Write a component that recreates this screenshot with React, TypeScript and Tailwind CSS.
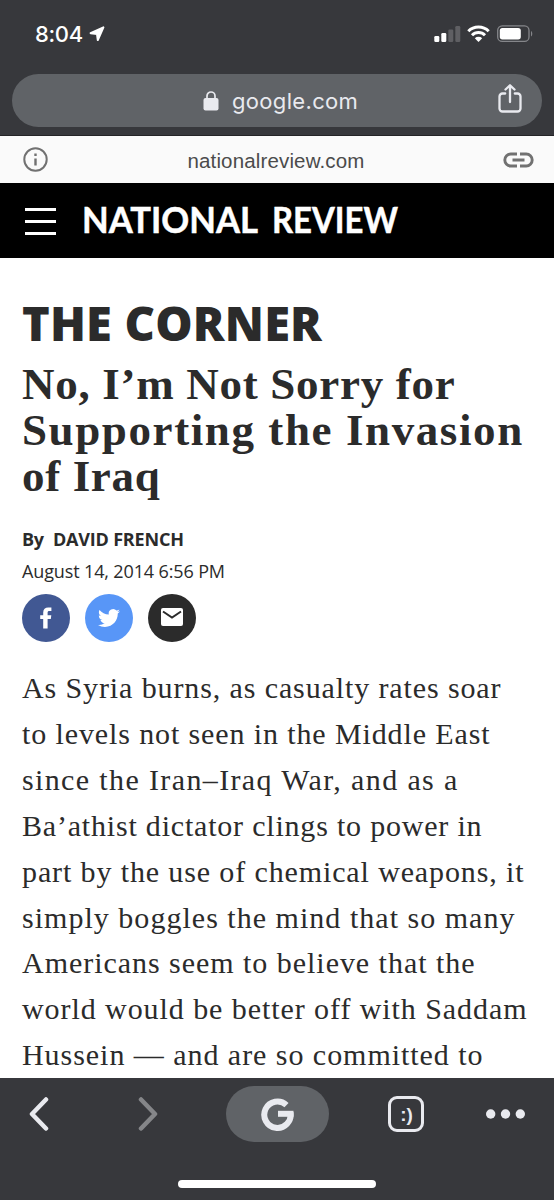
import { useLayoutEffect, useRef } from "react";

const paragraph = [
  { text: "As Syria burns, as casualty rates soar", width: 479 },
  { text: "to levels not seen in the Middle East", width: 468 },
  { text: "since the Iran–Iraq War, and as a", width: 436 },
  { text: "Ba’athist dictator clings to power in", width: 460 },
  { text: "part by the use of chemical weapons, it", width: 502 },
  { text: "simply boggles the mind that so many", width: 493 },
  { text: "Americans seem to believe that the", width: 453 },
  { text: "world would be better off with Saddam", width: 505 },
  { text: "Hussein — and are so committed to", width: 461 },
];

const headline = [
  { text: "No, I’m Not Sorry for", width: 433 },
  { text: "Supporting the Invasion", width: 501 },
  { text: "of Iraq", width: 138 },
];

// Tracks a line of text out (or in) until it fills the given width
function FittedText({ text, width, className = "" }: { text: string; width: number; className?: string }) {
  const ref = useRef<HTMLSpanElement>(null);

  useLayoutEffect(() => {
    const el = ref.current;
    if (!el) return;
    el.style.letterSpacing = "0px";
    const natural = el.getBoundingClientRect().width;
    el.style.letterSpacing = `${(width - natural) / (text.length - 0.5)}px`;
  }, [text, width]);

  return (
    <span className={`block whitespace-nowrap ${className}`}>
      <span ref={ref}>{text}</span>
    </span>
  );
}

function StatusBar() {
  return (
    <div className="flex h-[74px] items-start justify-between pl-[35px] pr-[21px] pt-[20px] text-white">
      <div className="flex items-center gap-[6px]">
        <FittedText text="8:04" width={48} className="text-[22px] leading-7 font-medium" />
        <svg className="h-4 w-4" viewBox="0 0 16 16" fill="currentColor" stroke="currentColor" strokeLinejoin="round">
          <path d="M14.400 1.400 8.800 14 8 8 1.600 7.200Z" strokeWidth="2" />
        </svg>
      </div>
      <svg className="mt-[4px] h-5 w-[100px]" viewBox="0 0 100 20">
        <g fill="#fff">
          <rect x="1.300" y="12" width="5" height="6" rx="1.300" />
          <rect x="8.300" y="9" width="5" height="9" rx="1.300" />
          <rect x="15.300" y="5.500" width="5" height="12.500" rx="1.300" opacity=".2" />
          <rect x="22.300" y="2" width="5" height="16" rx="1.300" opacity=".2" />
        </g>
        <g fill="none" stroke="#fff" strokeWidth="3">
          <path d="M35.300 7.200a14.500 14.500 0 0 1 20.400 0" />
          <path d="M39 11.300a9.200 9.200 0 0 1 13 0" />
        </g>
        <path d="M41.800 14.300a5.400 5.400 0 0 1 7.400 0L45.500 18Z" fill="#fff" />
        <rect x="64.700" y="1.800" width="31.300" height="15.600" rx="4.500" fill="none" stroke="#85868a" strokeWidth="1.300" />
        <rect x="66.800" y="4" width="21" height="11.400" rx="2.600" fill="#fff" />
        <path d="M98 7v5.500c1.700-.8 1.700-4.700 0-5.500Z" fill="#85868a" />
      </svg>
    </div>
  );
}

function AddressBar() {
  return (
    <div className="mx-3 flex h-[53px] items-center rounded-full bg-[#606367] pl-[191px] pr-[20px] text-[#e9eaef]">
      <svg className="h-5 w-4" viewBox="0 0 16 20">
        <rect x=".5" y="7" width="15" height="12.500" rx="2" fill="currentColor" />
        <path d="M4 8V5a4 4 0 0 1 8 0v3" fill="none" stroke="currentColor" strokeWidth="1.700" />
      </svg>
      <FittedText text="google.com" width={126} className="ml-[13px] text-[22px] leading-7" />
      <svg className="-mt-[4px] ml-auto h-[30px] w-6" viewBox="0 0 24 30" fill="none" stroke="currentColor" strokeWidth="2.300" strokeLinecap="round" strokeLinejoin="round">
        <path d="M7.200 9.500H4.500a3 3 0 0 0-3 3v12a3 3 0 0 0 3 3h15a3 3 0 0 0 3-3v-12a3 3 0 0 0-3-3h-2.700M12 18V1.500M7.500 5.500 12 1.300l4.500 4.200" />
      </svg>
    </div>
  );
}

function SourceBar() {
  return (
    <div className="flex h-[47px] items-center justify-between bg-[#fafafa] pl-[23px] pr-[20px] text-[#717171]">
      <svg className="h-[26px] w-[26px]" viewBox="0 0 26 26" fill="none" stroke="currentColor">
        <circle cx="12.500" cy="12.500" r="11.200" strokeWidth="2" />
        <path d="M12.500 11.500v7M12.500 6.500v2.400" strokeWidth="2.400" />
      </svg>
      <FittedText text="nationalreview.com" width={177} className="pt-[3px] font-['Liberation_Sans',sans-serif] text-[20.500px] leading-6 text-[#4b4b4b]" />
      <svg className="h-4 w-[31px]" viewBox="0 0 31 16" fill="none" stroke="currentColor" strokeWidth="2.900">
        <path d="M14 2H7.800a6 6 0 0 0 0 12H14M17 2h6.200a6 6 0 0 1 0 12H17M9.500 8h12" />
      </svg>
    </div>
  );
}

function SiteHeader() {
  return (
    <div className="flex h-[75px] items-center bg-black pl-[25px]">
      <div className="mt-[1px] flex w-[31px] flex-col gap-[9px]">
        <div className="h-[3px] bg-white" />
        <div className="h-[3px] bg-white" />
        <div className="h-[3px] bg-white" />
      </div>
      <svg className="ml-[21px] h-[60px] w-[360px] overflow-visible" viewBox="0 0 360 60" fill="#fff" stroke="#fff" strokeWidth=".5" fontFamily="Lato, sans-serif" fontWeight="700" fontSize="37">
        <text x="5" y="42" textLength="176" lengthAdjust="spacingAndGlyphs">NATIONAL</text>
        <text x="195" y="42" textLength="126" lengthAdjust="spacingAndGlyphs">REVIEW</text>
      </svg>
    </div>
  );
}

function ShareButtons() {
  return (
    <div className="mt-[7px] flex gap-[15px] text-white">
      <div className="flex h-12 w-12 items-center justify-center rounded-full bg-[#415893]">
        <svg className="h-[22px] w-3" viewBox="0 0 12 22" fill="currentColor">
          <path d="M3.200 21.500V12H.2V8.200h3V5.400C3.200 2.100 5.200.4 8.200.4c1.400 0 2.800.1 3.200.2v3.400H9.500C8 4 7.600 4.600 7.600 5.700v2.500h3.700l-.5 3.800H7.600v9.500Z" />
        </svg>
      </div>
      <div className="flex h-12 w-12 items-center justify-center rounded-full bg-[#5896f7]">
        <svg className="h-[22px] w-[22px]" viewBox="0 0 24 24" fill="currentColor">
          <path d="M23.950 4.570a10 10 0 0 1-2.820.77 4.960 4.960 0 0 0 2.160-2.720c-.95.550-2 .950-3.120 1.180a4.920 4.920 0 0 0-8.380 4.480C7.690 8.090 4.070 6.130 1.640 3.160a4.820 4.820 0 0 0-.67 2.480c0 1.710.87 3.210 2.190 4.100a4.900 4.900 0 0 1-2.230-.62v.06a4.920 4.920 0 0 0 3.950 4.830 5 5 0 0 1-2.210.08 4.940 4.940 0 0 0 4.600 3.420A9.870 9.870 0 0 1 0 19.540a13.990 13.990 0 0 0 7.550 2.210c9.050 0 14-7.500 14-13.980 0-.21 0-.42-.02-.63a9.940 9.940 0 0 0 2.460-2.550Z" />
        </svg>
      </div>
      <div className="flex h-12 w-12 items-center justify-center rounded-full bg-[#2b2b2b]">
        <svg className="-mt-[2px] h-[18px] w-[22px]" viewBox="0 0 22 18">
          <rect width="22" height="18" rx="2" fill="#fff" />
          <path d="m2 3.500 9 6 9-6" fill="none" stroke="#2b2b2b" strokeWidth="2" />
        </svg>
      </div>
    </div>
  );
}

function Toolbar() {
  return (
    <div className="flex h-[122px] flex-col items-center bg-[#37383c] pt-[8px] text-[#e9eaef]">
      <div className="flex h-14 w-full items-center pl-[29px]">
        <svg className="h-[36px] w-5" viewBox="0 0 20 36" fill="none" stroke="currentColor" strokeWidth="4.500" strokeLinecap="round" strokeLinejoin="round">
          <path d="M17 3.500 3 18l14 14.500" />
        </svg>
        <svg className="ml-[89px] h-[36px] w-5" viewBox="0 0 20 36" fill="none" stroke="#858689" strokeWidth="4.500" strokeLinecap="round" strokeLinejoin="round">
          <path d="m3 3.500 14 14.500L3 32.500" />
        </svg>
        <div className="ml-[68px] flex h-14 w-[103px] items-center justify-center rounded-full bg-[#606367]">
          <svg className="h-[34px] w-[34px]" viewBox="0 0 34 34" fill="none" stroke="currentColor" strokeWidth="6">
            <path d="M25.500 8.100A13.200 13.200 0 1 0 29.500 15.500" />
            <path d="M17 16.800h15.500" />
          </svg>
        </div>
        <div className="ml-[59px] flex h-9 w-9 items-center justify-center rounded-[9px] border-[3.500px] border-current pl-[1px] font-['Liberation_Sans',sans-serif] text-[19px] font-bold leading-none">:)</div>
        <svg className="ml-[62px] h-3 w-[39px]" viewBox="0 0 39 12" fill="currentColor">
          <circle cx="4.700" cy="6" r="4.700" />
          <circle cx="19.500" cy="6" r="4.700" />
          <circle cx="34.300" cy="6" r="4.700" />
        </svg>
      </div>
      <div className="mt-[38px] h-2 w-[198px] rounded-full bg-white" />
    </div>
  );
}

export default function App() {
  return (
    <div className="flex h-[1200px] w-[554px] flex-col overflow-hidden bg-white font-['Inter',sans-serif]">
      <header className="h-[136px] shrink-0 border-b border-[#242427] bg-[#37383c]">
        <StatusBar />
        <AddressBar />
      </header>
      <SourceBar />
      <SiteHeader />

      <main className="h-[820px] overflow-hidden px-[22px] pt-[37px] text-[#2b2b2b]">
        <FittedText text="THE CORNER" width={300} className="font-['Open_Sans',sans-serif] text-[47px] leading-[56px] font-extrabold" />
        <h1 className="mt-[10px] font-['Liberation_Serif',serif] text-[45px] leading-[46px] font-bold">
          {headline.map((line) => (
            <FittedText key={line.text} {...line} />
          ))}
        </h1>
        <div className="mt-[24px] flex gap-[9px] font-['Open_Sans',sans-serif] text-[18px] leading-8 font-bold">
          <FittedText text="By" width={22} />
          <FittedText text="DAVID FRENCH" width={131} />
        </div>
        <FittedText text="August 14, 2014 6:56 PM" width={203} className="font-['Open_Sans',sans-serif] text-[18px] leading-8" />
        <ShareButtons />
        <p className="mt-[23px] font-['Liberation_Serif',serif] text-[30px] leading-[45.900px]">
          {paragraph.map((line) => (
            <FittedText key={line.text} {...line} />
          ))}
        </p>
      </main>

      <Toolbar />
    </div>
  );
}
